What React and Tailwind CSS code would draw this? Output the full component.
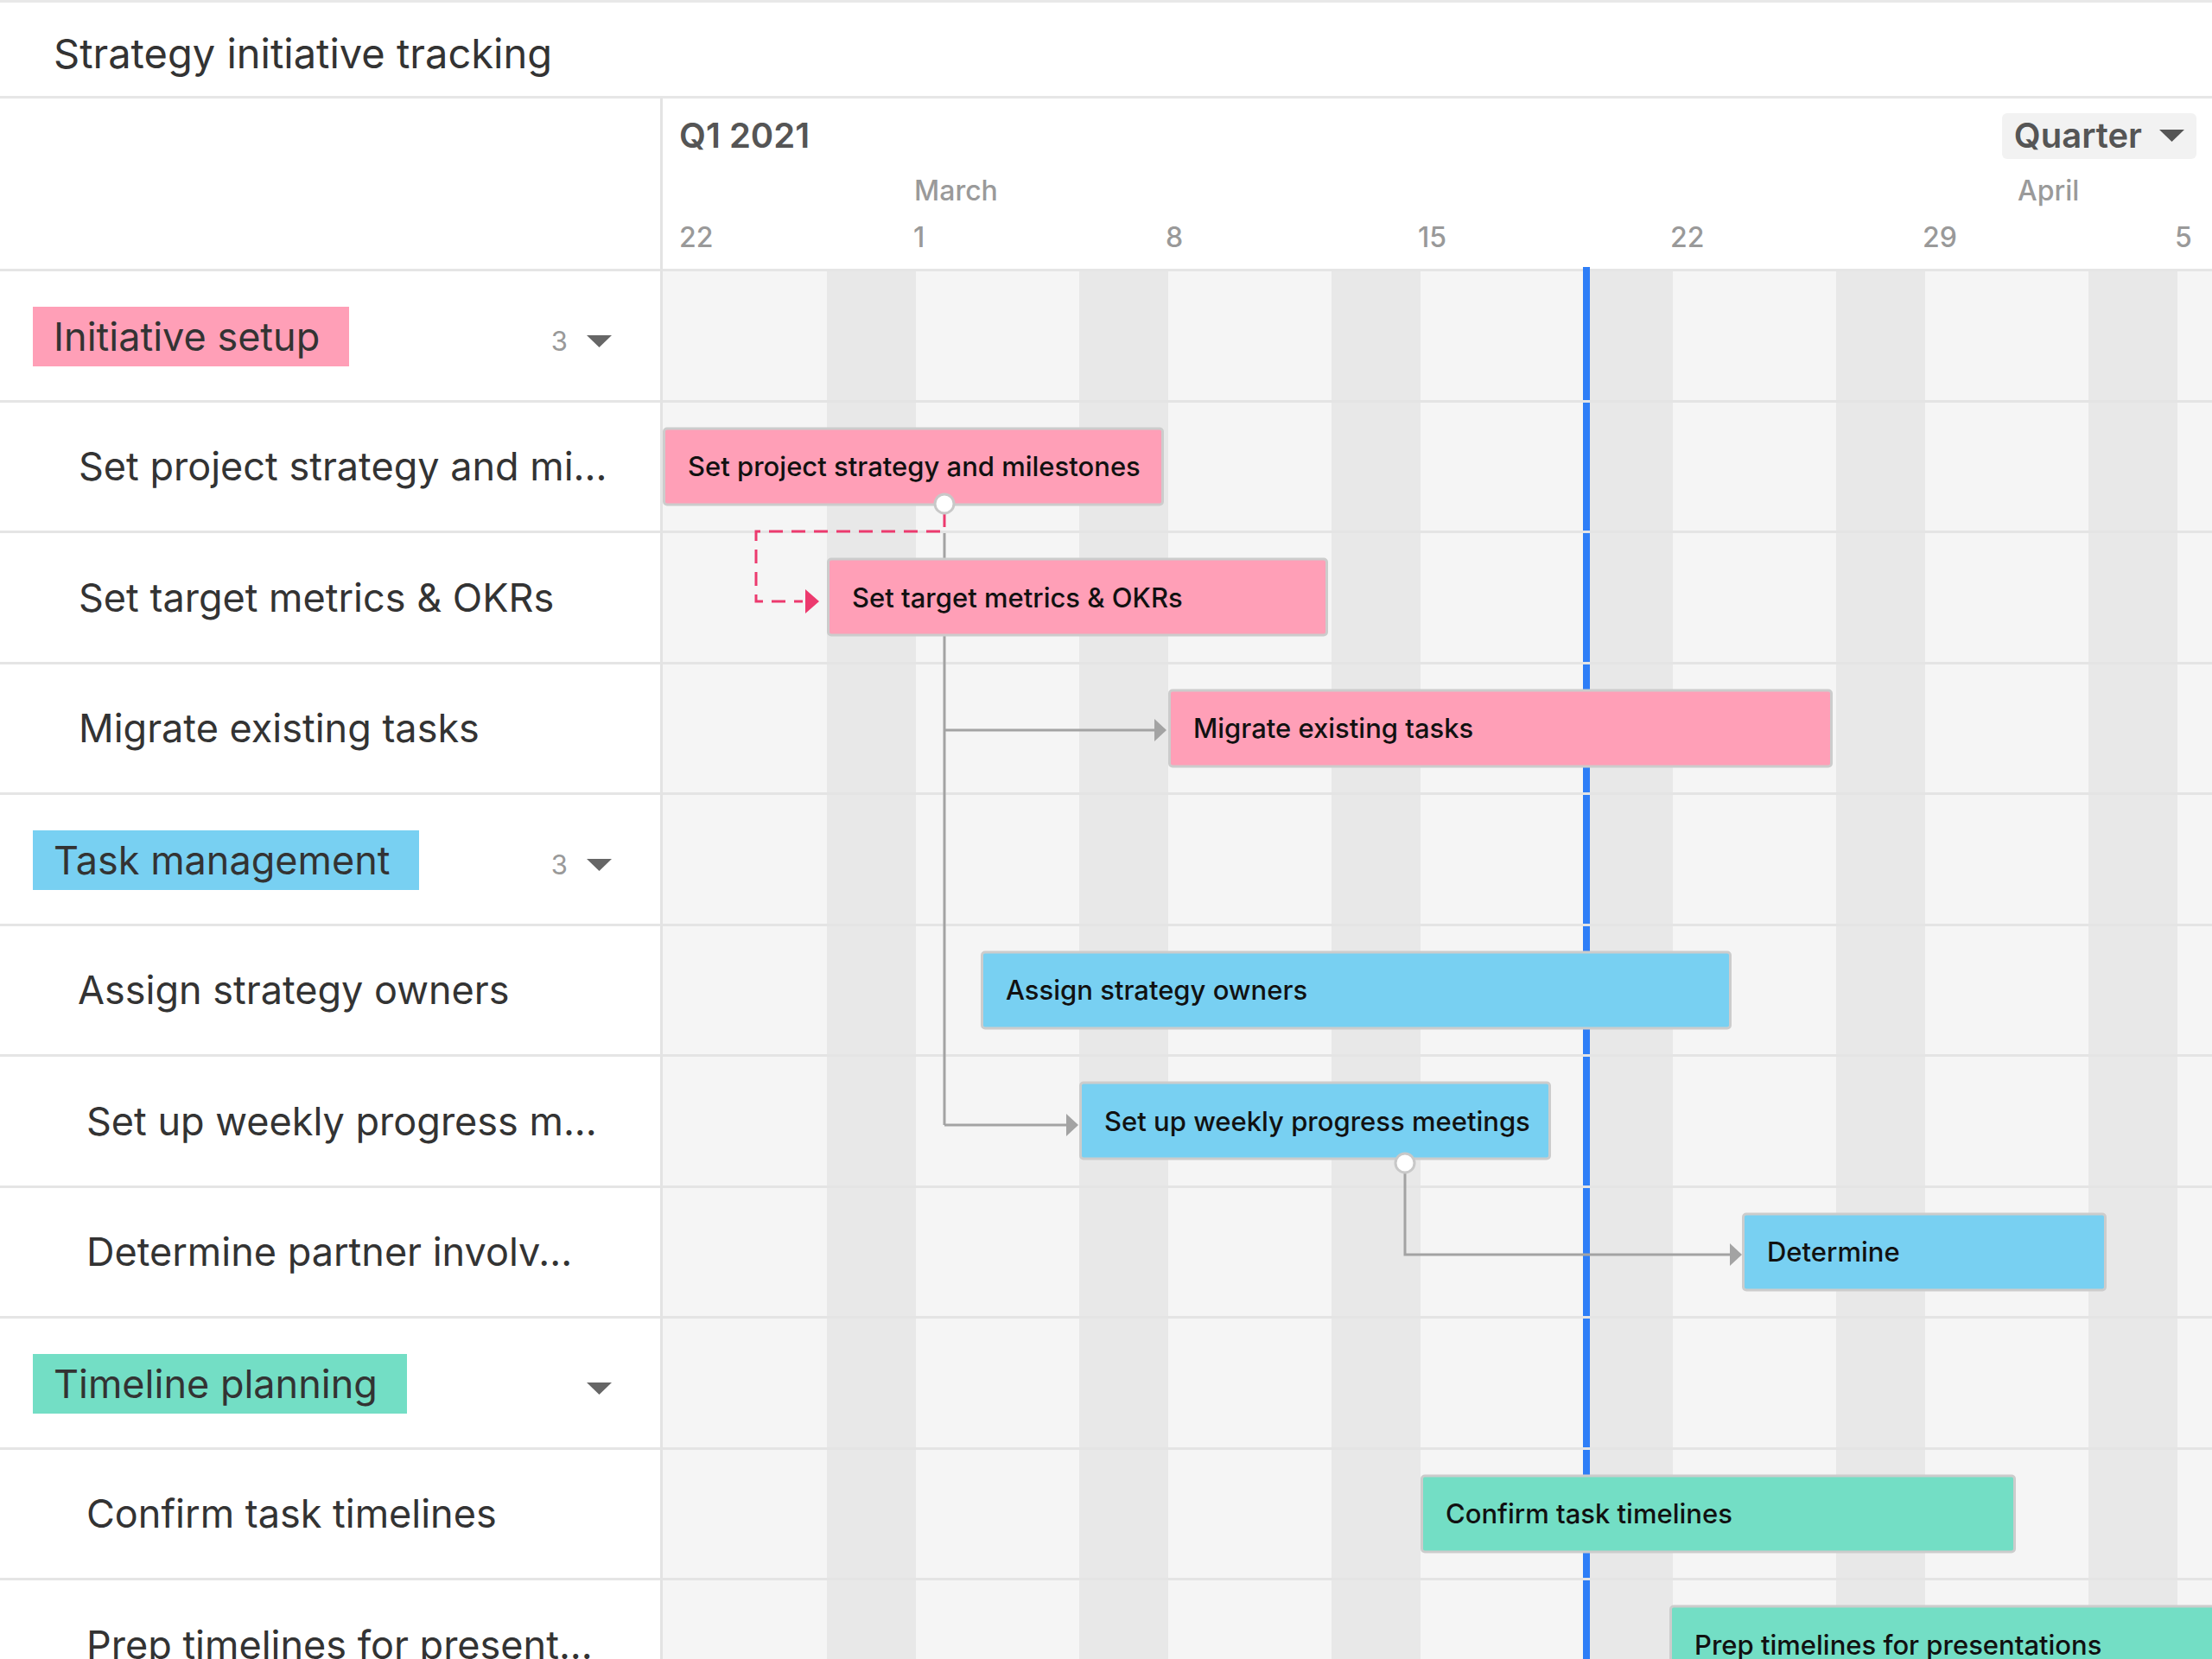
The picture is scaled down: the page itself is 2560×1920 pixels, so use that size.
import React from 'react';

// timeline geometry (px, relative to the timeline's left edge)
const WEEK = 292;
const FIRST_TICK = 293;
const SHADE = 103;
const ticks = [0, 1, 2, 3, 4, 5].map(i => FIRST_TICK + i * WEEK);
const dayLabels = ['1', '8', '15', '22', '29', '5'];

const PINK = 'bg-[#ff9fb7]';
const BLUE = 'bg-[#78d0f2]';
const GREEN = 'bg-[#73dec5]';

const rows = [
    { type: 'group', label: 'Initiative setup', color: PINK, count: 3 },
    { type: 'task', label: 'Set project strategy and mi...', indent: 'pl-[91px]', bar: { text: 'Set project strategy and milestones', left: 0, width: 580, color: PINK } },
    { type: 'task', label: 'Set target metrics & OKRs', indent: 'pl-[91px]', bar: { text: 'Set target metrics & OKRs', left: 190, width: 580, color: PINK } },
    { type: 'task', label: 'Migrate existing tasks', indent: 'pl-[91px]', bar: { text: 'Migrate existing tasks', left: 585, width: 769, color: PINK } },
    { type: 'group', label: 'Task management', color: BLUE, count: 3 },
    { type: 'task', label: 'Assign strategy owners', indent: 'pl-[90px]', bar: { text: 'Assign strategy owners', left: 368, width: 869, color: BLUE } },
    { type: 'task', label: 'Set up weekly progress m...', indent: 'pl-[100px]', bar: { text: 'Set up weekly progress meetings', left: 482, width: 546, color: BLUE } },
    { type: 'task', label: 'Determine partner involv...', indent: 'pl-[100px]', bar: { text: 'Determine', left: 1249, width: 422, color: BLUE } },
    { type: 'group', label: 'Timeline planning', color: GREEN },
    { type: 'task', label: 'Confirm task timelines', indent: 'pl-[100px]', bar: { text: 'Confirm task timelines', left: 877, width: 689, color: GREEN } },
    { type: 'task', label: 'Prep timelines for present...', indent: 'pl-[100px]', bar: { text: 'Prep timelines for presentations', left: 1165, width: 720, color: GREEN } },
];

function Caret({ className = '' }) {
    return (
        <svg className={className} width="29" height="14" viewBox="0 0 29 14">
            <polygon points="0,0 29,0 14.5,14" fill="currentColor" />
        </svg>
    );
}

function LeftRow({ row }) {
    if (row.type === 'group') {
        return (
            <div className="h-[151.5px] border-b-[3px] border-[#e5e5e5] flex items-center pl-[38px] pr-[56px]">
                <div className={`h-[69px] mt-[3px] pl-[24px] pr-[34px] flex items-center text-[45px] text-[#333] ${row.color}`}>
                    {row.label}
                </div>
                <div className="ml-auto mt-[14px] flex items-center gap-[22px]">
                    {row.count && <span className="text-[31px] text-[#999]">{row.count}</span>}
                    <Caret className="text-[#666]" />
                </div>
            </div>
        );
    }
    return (
        <div className={`h-[151.5px] border-b-[3px] border-[#e5e5e5] flex items-center text-[45px] text-[#333] whitespace-nowrap ${row.indent}`}>
            {row.label}
        </div>
    );
}

function Bar({ bar }) {
    return (
        <div
            className={`absolute top-1/2 -translate-y-1/2 h-[91px] z-20 border-[3px] border-[#cccccc] rounded-[5px] flex items-center pl-[26px] text-[31px] font-medium text-[#111] whitespace-nowrap ${bar.color}`}
            style={{ left: bar.left, width: bar.width }}
        >
            {bar.text}
        </div>
    );
}

function Connectors() {
    const gray = '#a3a3a3';
    const pink = '#ec3a6e';
    return (
        <svg className="absolute left-0 top-0 z-10 pointer-events-none" width="1793" height="1608" viewBox="0 0 1793 1608">
            {/* solid grey dependencies */}
            <path d="M326 303 V988 M326 531 H570 M326 988 H468" stroke={gray} strokeWidth="3" fill="none" />
            <polygon points="569,518 583,531 569,544" fill={gray} />
            <polygon points="467,975 481,988 467,1001" fill={gray} />
            <path d="M859 1040 V1138 H1237" stroke={gray} strokeWidth="3" fill="none" />
            <polygon points="1235,1125 1249,1138 1235,1151" fill={gray} />
            {/* dashed pink dependency */}
            <path d="M326 280 V301 H108 V382 H162" stroke={pink} strokeWidth="3" fill="none" strokeDasharray="16 10" />
            <polygon points="165,368 181,382 165,396" fill={pink} />
        </svg>
    );
}

function Handles() {
    return (
        <svg className="absolute left-0 top-0 z-30 pointer-events-none" width="1793" height="1608" viewBox="0 0 1793 1608">
            <circle cx="326" cy="269" r="11" fill="#fff" stroke="#c8c8c8" strokeWidth="3" />
            <circle cx="859" cy="1032" r="11" fill="#fff" stroke="#c8c8c8" strokeWidth="3" />
        </svg>
    );
}

export default function App() {
    return (
        <div className="w-[2560px] h-[1920px] overflow-hidden bg-white border-t-[3px] border-[#e8e8e8] font-['Inter',sans-serif]">
            <div className="h-[108px] flex items-center pt-[10px] pl-[62px] text-[47px] text-[#333]">
                Strategy initiative tracking
            </div>

            <div className="flex border-t-[3px] border-[#e6e6e6]">
                {/* Left: row names */}
                <div className="w-[767px] shrink-0 border-r-[3px] border-[#e3e3e3]">
                    <div className="h-[200px] border-b-[3px] border-[#e5e5e5]" />
                    {rows.map((row, i) => (
                        <LeftRow key={i} row={row} />
                    ))}
                </div>

                {/* Right: timeline */}
                <div className="flex-1 min-w-0">
                    <div className="relative h-[200px] border-b-[3px] border-[#e5e5e5]">
                        <div className="flex items-center justify-between pl-[19px] pr-[18px] pt-[13px]">
                            <span className="text-[40px] font-semibold text-[#555]">Q1 2021</span>
                            <div className="h-[53px] px-[14px] rounded-[6px] bg-[#f2f2f2] flex items-center gap-[20px]">
                                <span className="text-[40px] font-semibold text-[#555]">Quarter</span>
                                <Caret className="text-[#555]" />
                            </div>
                        </div>
                        <span className="absolute top-[89px] leading-[36px] text-[32px] font-medium text-[#9a9a9a]" style={{ left: ticks[0] - 2 }}>March</span>
                        <span className="absolute top-[89px] leading-[36px] text-[32px] font-medium text-[#9a9a9a]" style={{ left: 1568 }}>April</span>
                        <span className="absolute top-[143px] left-[19px] leading-[36px] text-[32px] font-medium text-[#999]">22</span>
                        {ticks.map((t, i) => (
                            <span key={t} className="absolute top-[143px] leading-[36px] text-[32px] font-medium text-[#999]" style={{ left: t - 3 }}>
                                {dayLabels[i]}
                            </span>
                        ))}
                    </div>

                    <div className="relative bg-[#f5f5f5]">
                        {/* weekend shading */}
                        {ticks.map(t => (
                            <div key={t} className="absolute top-0 bottom-0 bg-[#e8e8e8]" style={{ left: t - SHADE, width: SHADE }} />
                        ))}
                        {/* today marker */}
                        <div className="absolute top-[-5px] bottom-0 left-[1065px] w-[8px] bg-[#2e7ef7]" />

                        {rows.map((row, i) => (
                            <div key={i} className="relative h-[151.5px] border-b-[3px] border-[#e4e4e4]">
                                {row.bar && <Bar bar={row.bar} />}
                            </div>
                        ))}

                        <Connectors />
                        <Handles />
                    </div>
                </div>
            </div>
        </div>
    );
}
